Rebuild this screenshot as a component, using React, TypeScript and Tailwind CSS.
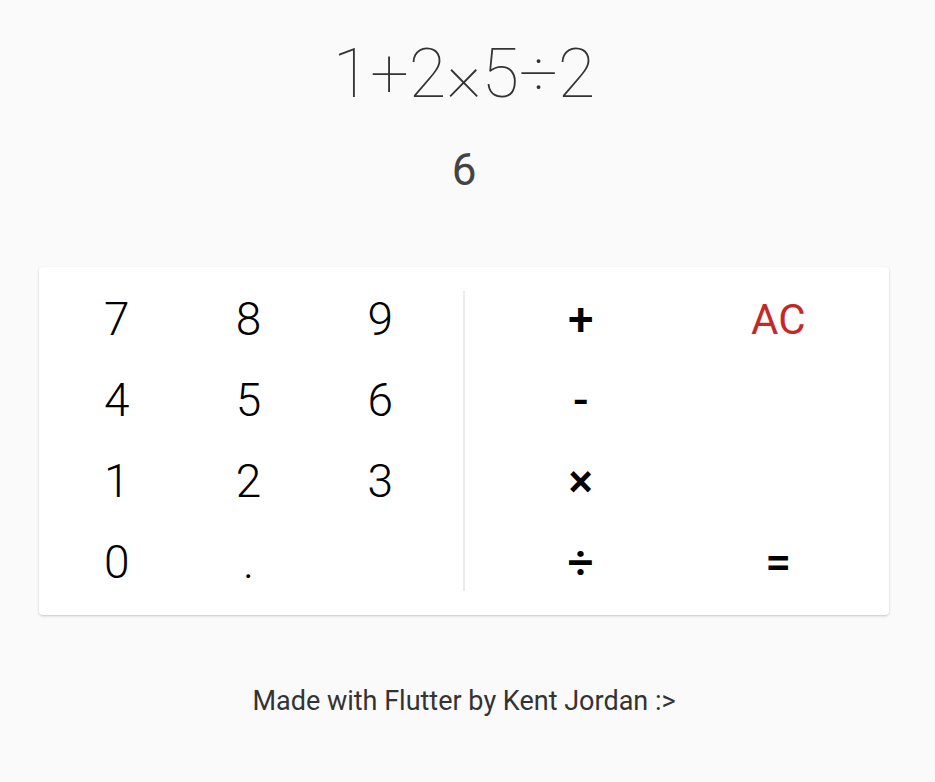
const digitRows = [
  ["7", "8", "9"],
  ["4", "5", "6"],
  ["1", "2", "3"],
  ["0", ".", ""],
];

const opRows = [
  ["+", "AC"],
  ["-", ""],
  ["×", ""],
  ["÷", "="],
];

export default function App() {
  return (
    <div className="min-h-[782px] w-full bg-[#fafafa] flex flex-col items-center pr-[7px] font-['Roboto',sans-serif]">
      {/* Display */}
      <div className="pt-[28px] text-[68.5px] leading-[92px] font-thin text-[#333333]">1+2×5÷2</div>
      <div className="mt-[22px] text-[44px] leading-[56px] text-[#444444]">6</div>

      {/* Keypad */}
      <div className="mt-[69px] w-[850px] bg-white rounded-[4px] shadow-[0_1px_3px_rgba(0,0,0,0.12),0_1px_2px_rgba(0,0,0,0.10)] p-3 flex">
        <div className="flex-1 grid grid-cols-3">
          {digitRows.flat().map((d, i) => (
            <div key={i} className="h-[81px] flex items-center justify-center text-[46px] font-light text-black">
              {d}
            </div>
          ))}
        </div>
        <div className="mx-[17px] my-3 w-[2px] bg-[#ebebeb]" />
        <div className="flex-1 grid grid-cols-2">
          {opRows.flat().map((o, i) => (
            <div
              key={i}
              className={
                o === "AC"
                  ? "h-[81px] flex items-center justify-center text-[42px] text-[#c62828]"
                  : "h-[81px] flex items-center justify-center text-[46px] font-medium text-black"
              }
            >
              {o}
            </div>
          ))}
        </div>
      </div>

      <div className="mt-[68px] text-[27px] leading-[36px] text-[#333333]">Made with Flutter by Kent Jordan :&gt;</div>
    </div>
  );
}
